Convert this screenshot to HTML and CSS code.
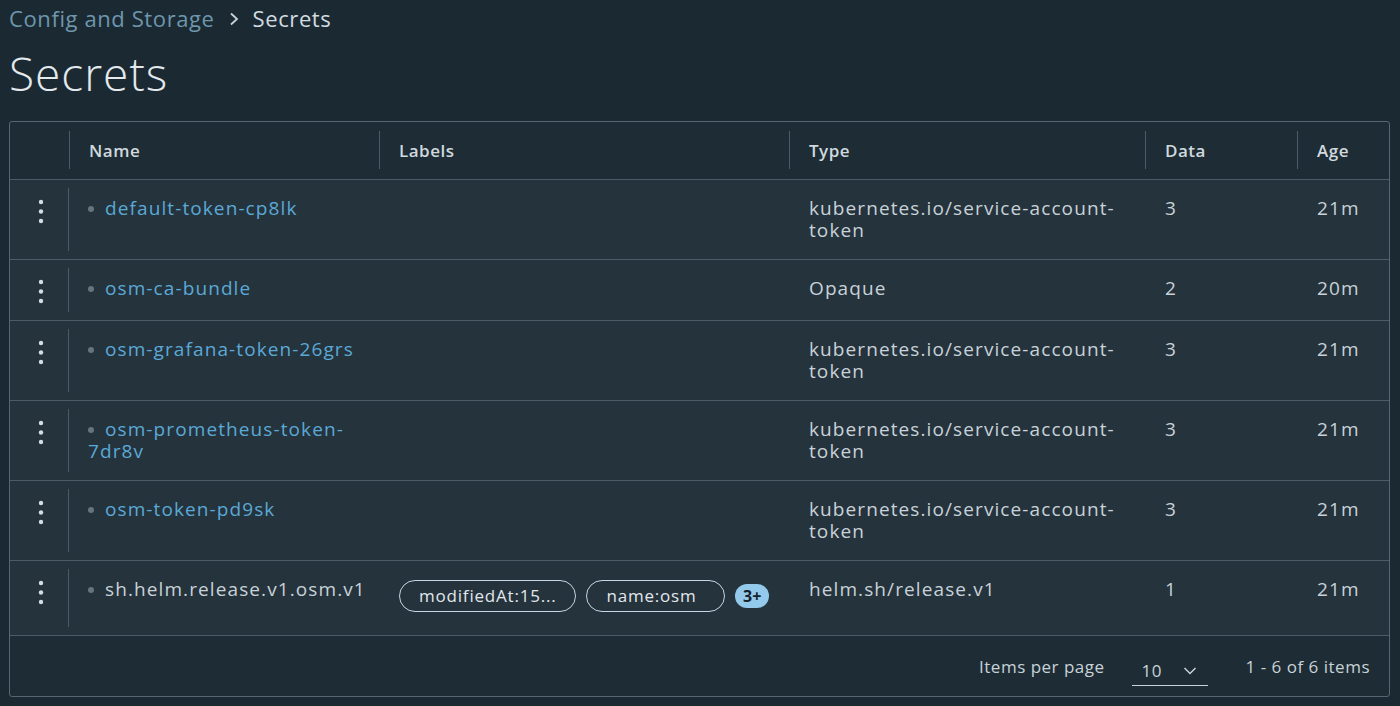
FILE: index.html
```html
<!DOCTYPE html>
<html lang="en">
<head>
<meta charset="utf-8">
<title>Secrets</title>
<link rel="stylesheet" href="styles.css">
</head>
<body>
<div class="page">
  <nav class="breadcrumb">
    <a class="crumb-link" href="#">Config and Storage</a>
    <svg class="crumb-sep" width="12" height="16" viewBox="0 0 12 16"><path d="M3 2.5 L9 8 L3 13.5" fill="none" stroke="#c8d2d8" stroke-width="1.8"/></svg>
    <span class="crumb-current">Secrets</span>
  </nav>
  <h1 class="title">Secrets</h1>

  <div class="datagrid">
    <div class="dg-head">
      <div class="hcell hcell-action"></div>
      <div class="hcell"><div class="hinner">Name</div></div>
      <div class="hcell"><div class="hinner">Labels</div></div>
      <div class="hcell"><div class="hinner">Type</div></div>
      <div class="hcell"><div class="hinner">Data</div></div>
      <div class="hcell"><div class="hinner">Age</div></div>
    </div>

    <div class="dg-row">
      <div class="cell-action"><div class="action-inner"><svg class="dots" width="6" height="26" viewBox="0 0 6 26"><circle cx="3" cy="3" r="2.2"/><circle cx="3" cy="12.5" r="2.2"/><circle cx="3" cy="22" r="2.2"/></svg></div></div>
      <div class="cell cell-name"><span class="bullet"></span><a class="link" href="#">default-token-cp8lk</a></div>
      <div class="cell"></div>
      <div class="cell">kubernetes.io/service-account-token</div>
      <div class="cell">3</div>
      <div class="cell">21m</div>
    </div>

    <div class="dg-row">
      <div class="cell-action"><div class="action-inner"><svg class="dots" width="6" height="26" viewBox="0 0 6 26"><circle cx="3" cy="3" r="2.2"/><circle cx="3" cy="12.5" r="2.2"/><circle cx="3" cy="22" r="2.2"/></svg></div></div>
      <div class="cell cell-name"><span class="bullet"></span><a class="link" href="#">osm-ca-bundle</a></div>
      <div class="cell"></div>
      <div class="cell">Opaque</div>
      <div class="cell">2</div>
      <div class="cell">20m</div>
    </div>

    <div class="dg-row">
      <div class="cell-action"><div class="action-inner"><svg class="dots" width="6" height="26" viewBox="0 0 6 26"><circle cx="3" cy="3" r="2.2"/><circle cx="3" cy="12.5" r="2.2"/><circle cx="3" cy="22" r="2.2"/></svg></div></div>
      <div class="cell cell-name"><span class="bullet"></span><a class="link" href="#">osm-grafana-token-26grs</a></div>
      <div class="cell"></div>
      <div class="cell">kubernetes.io/service-account-token</div>
      <div class="cell">3</div>
      <div class="cell">21m</div>
    </div>

    <div class="dg-row">
      <div class="cell-action"><div class="action-inner"><svg class="dots" width="6" height="26" viewBox="0 0 6 26"><circle cx="3" cy="3" r="2.2"/><circle cx="3" cy="12.5" r="2.2"/><circle cx="3" cy="22" r="2.2"/></svg></div></div>
      <div class="cell cell-name"><span class="bullet"></span><a class="link" href="#">osm-prometheus-token-7dr8v</a></div>
      <div class="cell"></div>
      <div class="cell">kubernetes.io/service-account-token</div>
      <div class="cell">3</div>
      <div class="cell">21m</div>
    </div>

    <div class="dg-row">
      <div class="cell-action"><div class="action-inner"><svg class="dots" width="6" height="26" viewBox="0 0 6 26"><circle cx="3" cy="3" r="2.2"/><circle cx="3" cy="12.5" r="2.2"/><circle cx="3" cy="22" r="2.2"/></svg></div></div>
      <div class="cell cell-name"><span class="bullet"></span><a class="link" href="#">osm-token-pd9sk</a></div>
      <div class="cell"></div>
      <div class="cell">kubernetes.io/service-account-token</div>
      <div class="cell">3</div>
      <div class="cell">21m</div>
    </div>

    <div class="dg-row dg-row-last">
      <div class="cell-action"><div class="action-inner"><svg class="dots" width="6" height="26" viewBox="0 0 6 26"><circle cx="3" cy="3" r="2.2"/><circle cx="3" cy="12.5" r="2.2"/><circle cx="3" cy="22" r="2.2"/></svg></div></div>
      <div class="cell cell-name"><span class="bullet"></span><span class="plain">sh.helm.release.v1.osm.v1</span></div>
      <div class="cell cell-labels">
        <span class="pill pill-wide">modifiedAt:15...</span>
        <span class="pill pill-narrow">name:osm</span>
        <span class="badge">3+</span>
      </div>
      <div class="cell">helm.sh/release.v1</div>
      <div class="cell">1</div>
      <div class="cell">21m</div>
    </div>

    <div class="dg-foot">
      <span class="foot-label">Items per page</span>
      <div class="select">
        <span>10</span>
        <svg width="14" height="10" viewBox="0 0 14 10"><path d="M1.5 2 L7 7.5 L12.5 2" fill="none" stroke="#c8d2d8" stroke-width="1.5"/></svg>
      </div>
      <span class="foot-count">1 - 6 of 6 items</span>
    </div>
  </div>
</div>
</body>
</html>
```

FILE: styles.css
```css
* { box-sizing: border-box; }

html, body {
  margin: 0;
  padding: 0;
  background: #1b2a32;
}

body {
  font-family: "Open Sans", Lato, sans-serif;
  color: #c8d2d8;
}

.page {
  padding: 0 10px 0 9px;
}

.breadcrumb {
  display: flex;
  align-items: center;
  height: 36px;
  font-size: 22px;
  letter-spacing: 0.6px;
}

.crumb-link {
  color: #6e96ad;
  text-decoration: none;
}

.crumb-sep {
  margin: 2px 13px 0 13px;
}

.crumb-current {
  color: #d2dbe0;
}

.title {
  margin: 12px 0 0 0;
  font-size: 46px;
  font-weight: 300;
  letter-spacing: 1px;
  line-height: 50px;
  color: #e3e9ed;
}

.datagrid {
  margin-top: 23px;
  border: 1px solid #566672;
  border-radius: 3px;
  background: #1e2d35;
}

.dg-head,
.dg-row {
  display: grid;
  grid-template-columns: 59px 310px 410px 356px 152px 1fr;
}

.dg-head {
  height: 58px;
  border-bottom: 1px solid #4b5b67;
}

.hcell {
  padding: 9px 0;
}

.hinner {
  height: 38px;
  border-left: 1px solid #4b5b67;
  padding-left: 19px;
  display: flex;
  align-items: center;
  font-size: 17px;
  font-weight: 600;
  letter-spacing: 0.5px;
  color: #d0d9de;
}

.dg-row {
  background: #25333d;
  border-bottom: 1px solid #4b5b67;
  min-height: 61px;
}

.cell-action {
  padding: 8px 0;
}

.action-inner {
  height: 100%;
  border-right: 1px solid #4b5b67;
  display: flex;
  justify-content: center;
  padding-top: 11px;
  padding-left: 4px;
}

.dots {
  fill: #d4dde2;
}

.cell {
  padding: 17px 20px 18px 20px;
  font-size: 19px;
  letter-spacing: 1.1px;
  line-height: 22px;
  color: #c8d2d8;
}

.cell-name {
  padding-left: 19px;
  padding-right: 10px;
}

.bullet {
  display: inline-block;
  width: 6px;
  height: 6px;
  border-radius: 50%;
  background: #66747e;
  margin-right: 11px;
  vertical-align: 3px;
}

.link {
  color: #5ba9d6;
  text-decoration: none;
}

.plain {
  color: #c8d2d8;
}

.cell-labels {
  display: flex;
  align-items: center;
  align-self: start;
  gap: 10px;
  padding-top: 19px;
  padding-bottom: 23px;
}

.pill {
  display: inline-flex;
  align-items: center;
  height: 32px;
  padding: 0 0 0 19px;
  border: 1.5px solid #c6d7e1;
  border-radius: 16px;
  font-size: 17px;
  letter-spacing: 0.8px;
  color: #e2e8ec;
  white-space: nowrap;
}

.pill-wide { width: 179px; }
.pill-narrow { width: 140px; }

.badge {
  display: inline-flex;
  align-items: center;
  justify-content: center;
  width: 34px;
  height: 24px;
  border-radius: 12px;
  background: #93c9ea;
  color: #14232b;
  font-size: 16px;
  font-weight: 700;
  letter-spacing: 0;
}

.dg-foot {
  height: 60px;
  display: flex;
  align-items: center;
  justify-content: flex-end;
  padding-right: 19px;
  font-size: 17px;
  letter-spacing: 0.5px;
  color: #c8d2d8;
}

.foot-label {
  margin-right: 27px;
}

.select {
  width: 76px;
  height: 32px;
  display: flex;
  align-items: center;
  justify-content: space-between;
  padding: 2px 11px 0 10px;
  border-bottom: 1.5px solid #c6d2d8;
  margin-right: 38px;
  margin-top: 8px;
}
```
